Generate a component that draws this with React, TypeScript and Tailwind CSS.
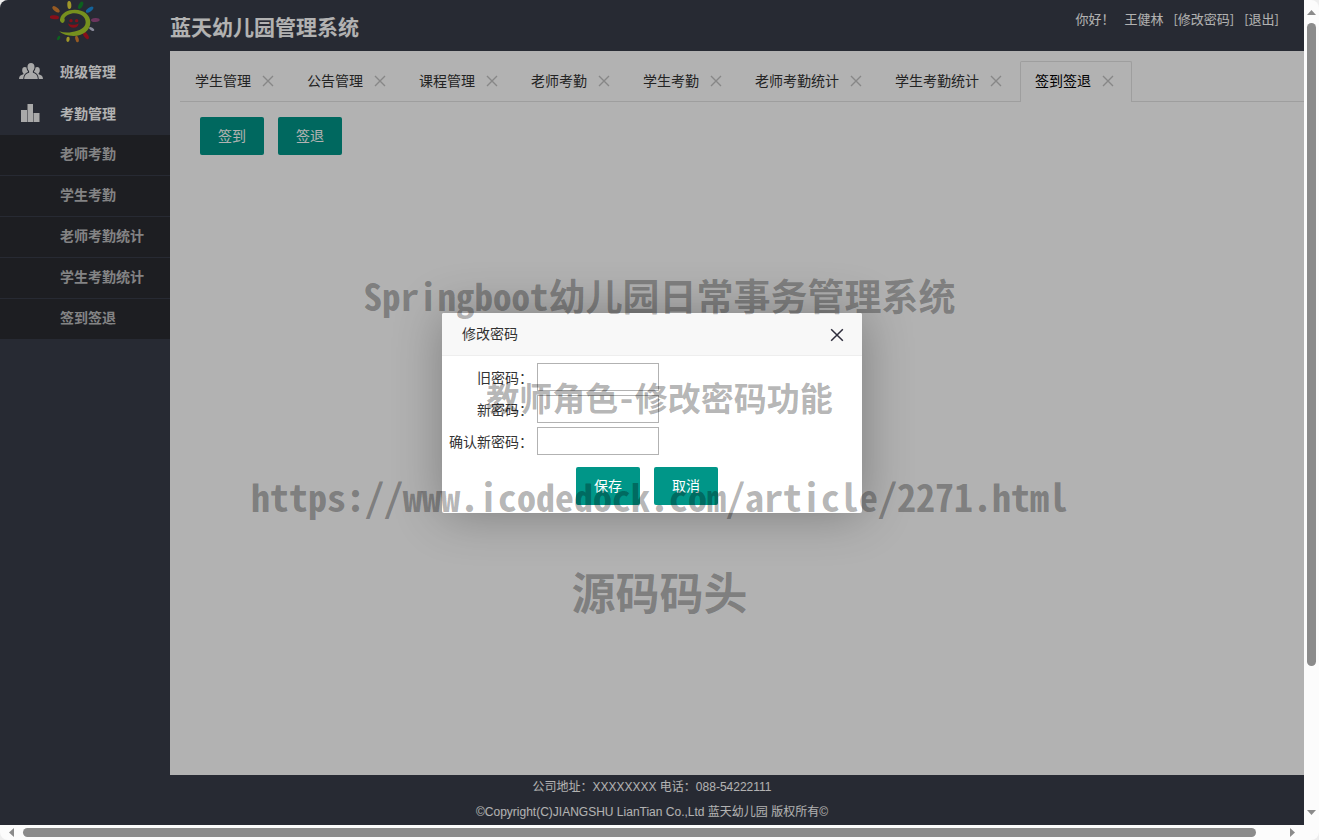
import { useState } from 'react'

const FONT = "font-['Noto_Sans_CJK_SC',sans-serif]"

const SUB_MENU = ['老师考勤', '学生考勤', '老师考勤统计', '学生考勤统计', '签到签退']

const INITIAL_TABS = [
  '学生管理',
  '公告管理',
  '课程管理',
  '老师考勤',
  '学生考勤',
  '老师考勤统计',
  '学生考勤统计',
  '签到签退',
]

const FIELDS = [
  { id: 'old-password', label: '旧密码：' },
  { id: 'new-password', label: '新密码：' },
  { id: 'confirm-password', label: '确认新密码：' },
]

const BTN_CLASS =
  'h-[38px] w-16 rounded-xs bg-[#009688] pb-0.5 text-sm text-white hover:opacity-80'

const MENU_CLASS = 'flex h-[42px] items-center gap-[17px] pb-0.5 pl-[19px]'

function SunLogo() {
  return (
    <svg viewBox="30 0 150 129" className="h-[43px] w-[50px]" aria-hidden="true">
      <ellipse cx="48" cy="28" rx="13" ry="6" fill="#d88232" transform="rotate(38 48 28)" />
      <ellipse cx="88" cy="15" rx="6" ry="12" fill="#e6d83c" transform="rotate(-4 88 15)" />
      <ellipse cx="122" cy="16" rx="6" ry="12" fill="#128a2c" transform="rotate(28 122 16)" />
      <ellipse cx="149" cy="29" rx="13" ry="6" fill="#1c8ede" transform="rotate(-36 149 29)" />
      <ellipse cx="166" cy="60" rx="13" ry="6" fill="#9a4c86" transform="rotate(-3 166 60)" />
      <ellipse cx="155" cy="87" rx="9" ry="4" fill="#c4c4dc" transform="rotate(32 155 87)" />
      <ellipse cx="138" cy="107" rx="12" ry="6" fill="#c01624" transform="rotate(55 138 107)" />
      <ellipse cx="111" cy="117" rx="5" ry="10" fill="#d88232" transform="rotate(-15 111 117)" />
      <ellipse cx="84" cy="118" rx="5" ry="8" fill="#e6d83c" transform="rotate(8 84 118)" />
      <ellipse cx="56" cy="114" rx="4" ry="7" fill="#128a2c" transform="rotate(32 56 114)" />
      <ellipse cx="43" cy="52" rx="14" ry="6" fill="#c01624" transform="rotate(4 43 52)" />
      <path
        d="M60 58C64 38 84 29 104 29C132 29 151 45 151 67C151 92 128 108 100 108C82 108 68 103 57 94C70 98 84 99 96 96C118 93 137 84 137 67C137 51 122 40 104 40C88 40 78 47 73 55C76 60 73 68 68 69C62 68 59 63 60 58Z"
        fill="#a9cf2c"
      />
      <circle cx="93" cy="62" r="5" fill="#c01624" />
      <circle cx="110" cy="62" r="5" fill="#c01624" />
      <path d="M84 70C92 76 108 76 116 70C115 88 87 88 84 70Z" fill="#c01624" />
    </svg>
  )
}

function GroupIcon() {
  return (
    <svg viewBox="0 0 24 16" className="h-4 w-6" fill="#f2f2f2" aria-hidden="true">
      <path d="M12 0c2.200 0 3.500 1.600 3.500 4 0 1.700-.6 3.200-1.600 4v1.700c2.800.8 4.600 2 4.900 6.300H5.200c.3-4.300 2.100-5.500 4.900-6.300V8C9.100 7.200 8.500 5.700 8.500 4c0-2.400 1.300-4 3.500-4z" />
      <path d="M5.800 4c.7 0 1.300.2 1.700.6.100 1.500.6 2.900 1.500 3.900v.6c-3 1-4.500 3.200-4.800 6.900H0c.2-3.100 1.500-4 4.400-4.800v-1c-.8-.6-1.200-1.700-1.200-3C3.200 5.200 4.200 4 5.800 4z" />
      <path d="M18.200 4c-.7 0-1.300.2-1.700.6-.1 1.500-.6 2.900-1.500 3.900v.6c3 1 4.500 3.200 4.800 6.900H24c-.2-3.100-1.500-4-4.400-4.800v-1c.8-.6 1.200-1.700 1.200-3 0-2-1-3.200-2.600-3.200z" />
    </svg>
  )
}

function ChartIcon() {
  return (
    <svg viewBox="0 0 24 18" className="h-[18px] w-6" fill="#f2f2f2" aria-hidden="true">
      <path d="M2 6h6v12H2zM8.500 0h5.500v18H8.500zM14.500 9h6v9h-6z" />
    </svg>
  )
}

function CrossIcon({ className }: { className: string }) {
  return (
    <svg viewBox="0 0 12 12" className={className} fill="none" stroke="currentColor" aria-hidden="true">
      <path d="M1 1l10 10M11 1L1 11" />
    </svg>
  )
}

function Sidebar() {
  return (
    <nav className="w-[170px] shrink-0 bg-[#393d49] text-sm font-bold text-white">
      <a href="#class" className={MENU_CLASS}>
        <GroupIcon />
        班级管理
      </a>
      <a href="#attendance" className={MENU_CLASS}>
        <ChartIcon />
        考勤管理
      </a>
      <ul className="divide-y divide-[#393d49] bg-[#2a2b32] text-white/70">
        {SUB_MENU.map((item) => (
          <li key={item}>
            <a href="#sub" className="block pb-1 pl-[60px] leading-9 hover:text-white">
              {item}
            </a>
          </li>
        ))}
      </ul>
    </nav>
  )
}

function TabBar() {
  const [tabs, setTabs] = useState(INITIAL_TABS)
  const [active, setActive] = useState('签到签退')

  return (
    <div className="ml-2.5 mt-2.5 flex h-[41px] border-b border-[#e2e2e2]">
      {tabs.map((tab) => (
        <div
          key={tab}
          className={
            tab === active
              ? '-mb-px flex items-center rounded-t-xs border border-b-0 border-[#e2e2e2] bg-white px-3.5 pb-0.5 text-black'
              : 'flex items-center px-[15px] text-[#333]'
          }
        >
          <button
            type="button"
            className="whitespace-nowrap pb-0.5 text-sm"
            onClick={() => setActive(tab)}
          >
            {tab}
          </button>
          <button
            type="button"
            aria-label={`关闭${tab}`}
            className="ml-2 flex size-[18px] items-center justify-center text-[#c2c2c2]"
            onClick={() => setTabs((prev) => prev.filter((t) => t !== tab))}
          >
            <CrossIcon className="size-3 stroke-[1.4]" />
          </button>
        </div>
      ))}
    </div>
  )
}

function PasswordDialog({ onClose }: { onClose: () => void }) {
  return (
    <div
      role="dialog"
      aria-label="修改密码"
      className="w-[420px] rounded-xs bg-white pb-2 text-sm text-[#333] shadow-[1px_1px_50px_rgba(0,0,0,0.3)]"
    >
      <div className="flex h-[43px] items-center justify-between rounded-t-xs border-b border-[#eee] bg-[#f8f8f8] pl-5 pr-[18px]">
        <h2 className="pb-0.5">修改密码</h2>
        <button type="button" aria-label="关闭" className="pt-0.5 text-[#2e2d3c]" onClick={onClose}>
          <CrossIcon className="size-[14px] stroke-[1.3]" />
        </button>
      </div>
      <form onSubmit={(e) => e.preventDefault()}>
        <div className="pt-[5px]">
          {FIELDS.map((field) => (
            <div key={field.id} className="flex h-8 items-center gap-1">
              <label htmlFor={field.id} className="w-[91px] text-right">
                {field.label}
              </label>
              <input
                id={field.id}
                type="password"
                className="h-7 w-[122px] border border-[#b2b2b2] bg-white px-1 outline-none"
              />
            </div>
          ))}
        </div>
        <div className="flex justify-center gap-3.5 pr-2.5 pt-2.5">
          <button type="submit" className={BTN_CLASS}>
            保存
          </button>
          <button type="button" className={BTN_CLASS} onClick={onClose}>
            取消
          </button>
        </div>
      </form>
    </div>
  )
}

function Watermark() {
  return (
    <div className="pointer-events-none absolute inset-x-0 top-[243px] whitespace-nowrap text-center font-['Noto_Sans_Mono_CJK_SC','Noto_Sans_CJK_SC',monospace] font-bold text-black/30">
      <p className="text-[37px] leading-[104px]">Springboot幼儿园日常事务管理系统</p>
      <p className="text-[33px] leading-[100px]">教师角色-修改密码功能</p>
      <p className="text-[38px] leading-[98px]">https://www.icodedock.com/article/2271.html</p>
      <p className="text-[44px] leading-[92px]">源码码头</p>
    </div>
  )
}

function VerticalScrollbar() {
  return (
    <div className="flex w-[15px] shrink-0 flex-col items-center rounded-tr-lg bg-[#fcfcfc] py-2.5" aria-hidden="true">
      <svg viewBox="0 0 9 5" className="h-[5px] w-[9px]" fill="#8b8b8b">
        <path d="M4.500 0L9 5H0z" />
      </svg>
      <div className="mt-2 w-[9px] flex-[643] rounded-full bg-[#8b8b8b]" />
      <div className="flex-[144]" />
      <svg viewBox="0 0 9 5" className="h-[5px] w-[9px]" fill="#8b8b8b">
        <path d="M0 0h9L4.500 5z" />
      </svg>
    </div>
  )
}

function HorizontalScrollbar() {
  return (
    <div className="flex h-[15px] shrink-0 items-center rounded-b-lg bg-[#fcfcfc] pl-[9px] pr-6" aria-hidden="true">
      <svg viewBox="0 0 5 9" className="h-[9px] w-[5px]" fill="#8b8b8b">
        <path d="M5 0v9L0 4.500z" />
      </svg>
      <div className="ml-[9px] h-[9px] flex-[1233] rounded-full bg-[#8b8b8b]" />
      <div className="flex-[34]" />
      <svg viewBox="0 0 5 9" className="h-[9px] w-[5px]" fill="#8b8b8b">
        <path d="M0 0l5 4.500L0 9z" />
      </svg>
    </div>
  )
}

export default function App() {
  const [open, setOpen] = useState(true)

  return (
    <div className={`relative flex h-screen flex-col overflow-hidden bg-[#eee] ${FONT}`}>
      <div className="flex min-h-0 flex-1">
        <div className="relative flex min-w-0 flex-1 flex-col overflow-hidden rounded-tl-lg bg-[#393d49]">
          <header className="flex h-[51px] shrink-0 items-start text-white">
            <div className="flex w-[170px] justify-center pr-5">
              <SunLogo />
            </div>
            <h1 className="flex-1 text-[21px] font-bold leading-[52px]">蓝天幼儿园管理系统</h1>
            <div className="flex gap-2.5 pr-[25px] text-[13px] leading-[38px]">
              <span>你好！</span>
              <span>王健林</span>
              <a
                href="#password"
                onClick={(e) => {
                  e.preventDefault()
                  setOpen(true)
                }}
              >
                [修改密码]
              </a>
              <a href="#logout">[退出]</a>
            </div>
          </header>

          <div className="flex min-h-0 flex-1">
            <Sidebar />
            <main className="min-w-0 flex-1 bg-white">
              <TabBar />
              <div className="flex gap-3.5 pl-[30px] pt-[15px]">
                <button type="button" className={BTN_CLASS}>
                  签到
                </button>
                <button type="button" className={BTN_CLASS}>
                  签退
                </button>
              </div>
            </main>
          </div>

          <footer className="shrink-0 text-center font-['Liberation_Sans','Noto_Sans_CJK_SC',sans-serif] text-xs leading-[25px] text-white">
            <p>公司地址：XXXXXXXX 电话：088-54222111</p>
            <p>©Copyright(C)JIANGSHU LianTian Co.,Ltd 蓝天幼儿园 版权所有©</p>
          </footer>

          {open && (
            <div className="absolute inset-0 flex items-center justify-center bg-black/30 pt-px">
              <PasswordDialog onClose={() => setOpen(false)} />
            </div>
          )}
        </div>
        <VerticalScrollbar />
      </div>
      <HorizontalScrollbar />
      <Watermark />
    </div>
  )
}
